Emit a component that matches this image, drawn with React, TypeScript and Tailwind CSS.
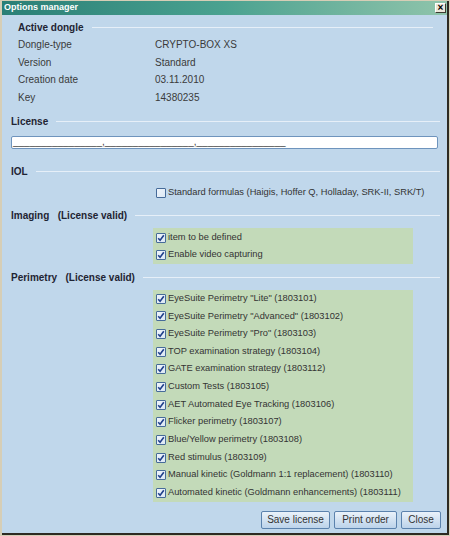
import React from "react"

const font = { fontFamily: '"Liberation Sans", Arial, sans-serif' }

const dongleRows = [
  ["Dongle-type", "CRYPTO-BOX XS"],
  ["Version", "Standard"],
  ["Creation date", "03.11.2010"],
  ["Key", "14380235"],
]

const imagingItems = ["item to be defined", "Enable video capturing"]

const perimetryItems = [
  'EyeSuite Perimetry "Lite" (1803101)',
  'EyeSuite Perimetry "Advanced" (1803102)',
  'EyeSuite Perimetry "Pro" (1803103)',
  "TOP examination strategy (1803104)",
  "GATE examination strategy (1803112)",
  "Custom Tests (1803105)",
  "AET Automated Eye Tracking (1803106)",
  "Flicker perimetry (1803107)",
  "Blue/Yellow perimetry (1803108)",
  "Red stimulus (1803109)",
  "Manual kinetic (Goldmann 1:1 replacement) (1803110)",
  "Automated kinetic (Goldmann enhancements) (1803111)",
]

function SectionHeader({ title, note }: { title: string; note?: string }) {
  return (
    <div className="flex h-[14px] items-center">
      <span className="text-[10px] font-bold text-[#1f2433] whitespace-pre">
        {title}
        {note ? `   ${note}` : ""}
      </span>
      <div className="ml-2 h-px flex-1 bg-[#e6eff8]" />
    </div>
  )
}

function Checkbox({ checked }: { checked: boolean }) {
  return (
    <span className="flex h-[10px] w-[10px] shrink-0 items-center justify-center rounded-[1px] border border-[#466b99] bg-gradient-to-br from-[#eef4fb] to-[#dce8f4]">
      {checked && (
        <svg width="8" height="8" viewBox="0 0 8 8">
          <path d="M1.2 4.2 L3.1 6.2 L6.8 1.3" fill="none" stroke="#1f3f8a" strokeWidth="1.6" />
        </svg>
      )}
    </span>
  )
}

function CheckRow({ label, checked, h }: { label: string; checked: boolean; h: string }) {
  return (
    <div className={`flex items-center gap-[2px] ${h}`}>
      <Checkbox checked={checked} />
      <span className="text-[9.3px] text-[#333] whitespace-nowrap">{label}</span>
    </div>
  )
}

function DialogButton({ label, w }: { label: string; w: string }) {
  return (
    <button
      className={`h-[18px] ${w} rounded-[2px] border border-[#5b82ad] bg-gradient-to-b from-[#eaf2fa] to-[#bcd3ea] text-[10px] text-[#333]`}
    >
      {label}
    </button>
  )
}

export default function App() {
  return (
    <div className="h-[536px] w-[450px] bg-[#d6ceb6] pl-[2px] pt-[1px] pr-[1px] pb-[1px]" style={font}>
      <div className="flex h-full flex-col border-r-2 border-b-2 border-[#2d2a22] bg-[#c0d7eb]">
        {/* title bar */}
        <div className="flex h-[14px] items-center justify-between bg-gradient-to-r from-[#2a7f76] via-[#4aa290] to-[#8fc4ab] pl-[2px] pr-[1px]">
          <span className="text-[9px] font-bold text-white">Options manager</span>
          <span className="flex h-[10px] w-[11px] items-center justify-center border border-t-white border-l-white border-r-[#3a3a30] border-b-[#3a3a30] bg-[#ebe7da] text-[10px] font-bold leading-none text-black">
            ×
          </span>
        </div>

        <div className="flex flex-1 flex-col pl-[9px] pr-[7px]">
          {/* active dongle */}
          <div className="mt-[5px] mx-[7px]">
            <SectionHeader title="Active dongle" />
            <div className="mt-[2px]">
              {dongleRows.map(([k, v]) => (
                <div key={k} className="flex h-[17.5px] items-center text-[10px] text-[#3a3a3a]">
                  <span className="w-[137px]">{k}</span>
                  <span>{v}</span>
                </div>
              ))}
            </div>
          </div>

          {/* license */}
          <div className="mt-[8px]">
            <SectionHeader title="License" />
          </div>
          <div className="mt-[8px] mr-[2px] flex h-[13px] items-end overflow-hidden rounded-[2px] border border-[#6e94bd] bg-white pl-[1px] text-[10px] leading-[12px] text-[#444]">
            ________________,________________,________________
          </div>

          {/* IOL */}
          <div className="mt-[15px]">
            <SectionHeader title="IOL" />
          </div>
          <div className="mt-[6px] pl-[145px]">
            <CheckRow label="Standard formulas (Haigis, Hoffer Q, Holladay, SRK-II, SRK/T)" checked={false} h="h-[18px]" />
          </div>

          {/* imaging */}
          <div className="mt-[6px]">
            <SectionHeader title="Imaging" note="(License valid)" />
          </div>
          <div className="mt-[6px] ml-[142px] w-[260px] bg-[#c3dab9] py-[1px] pl-[3px]">
            {imagingItems.map((it) => (
              <CheckRow key={it} label={it} checked h="h-[17px]" />
            ))}
          </div>

          {/* perimetry */}
          <div className="mt-[6px]">
            <SectionHeader title="Perimetry" note="(License valid)" />
          </div>
          <div className="mt-[6px] ml-[142px] w-[260px] bg-[#c3dab9] pl-[3px]">
            {perimetryItems.map((it) => (
              <CheckRow key={it} label={it} checked h="h-[17.66px]" />
            ))}
          </div>

          {/* buttons */}
          <div className="mt-[9px] -mr-[1px] flex justify-end gap-[4px]">
            <DialogButton label="Save license" w="w-[69px]" />
            <DialogButton label="Print order" w="w-[63px]" />
            <DialogButton label="Close" w="w-[40px]" />
          </div>
        </div>
      </div>
    </div>
  )
}
